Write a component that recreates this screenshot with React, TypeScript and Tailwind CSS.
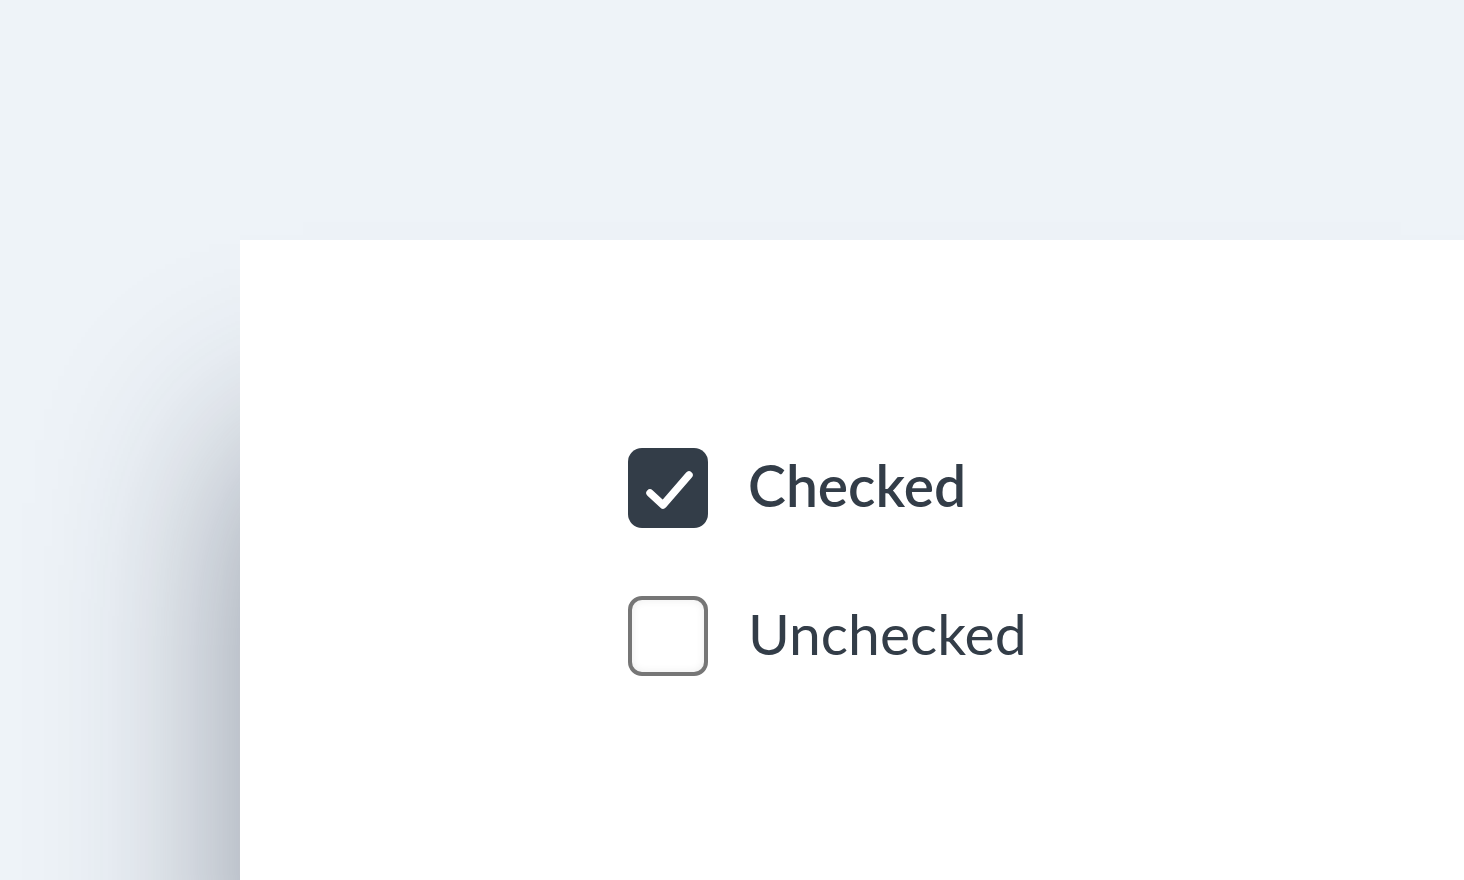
export default function App() {
  return (
    <div className="h-[880px] w-[1464px] overflow-hidden bg-[#eef3f8] font-['Lato',sans-serif]">
      <div className="ml-[240px] mt-[240px] h-[640px] bg-white pl-[388px] pt-[208px] shadow-[0_200px_180px_0_rgba(30,41,59,0.45)]">
        <div className="flex flex-col gap-[68px]">
          <label className="flex items-center gap-[40px]">
            <span className="flex h-[80px] w-[80px] items-center justify-center rounded-[14px] bg-[#333d48]">
              <svg width="80" height="80" viewBox="0 0 80 80" fill="none">
                <path d="M22 45 L35 57 L61 27" stroke="white" strokeWidth="7.5" strokeLinecap="round" strokeLinejoin="round" />
              </svg>
            </span>
            <span className="pb-[6px] text-[57px] font-semibold leading-none text-[#333d48]">Checked</span>
          </label>
          <label className="flex items-center gap-[40px]">
            <span className="h-[80px] w-[80px] rounded-[14px] border-[4px] border-[#767676] bg-white shadow-[inset_0_0_8px_rgba(0,0,0,0.08)]" />
            <span className="pb-[6px] text-[57px] font-normal leading-none text-[#333d48]">Unchecked</span>
          </label>
        </div>
      </div>
    </div>
  );
}
